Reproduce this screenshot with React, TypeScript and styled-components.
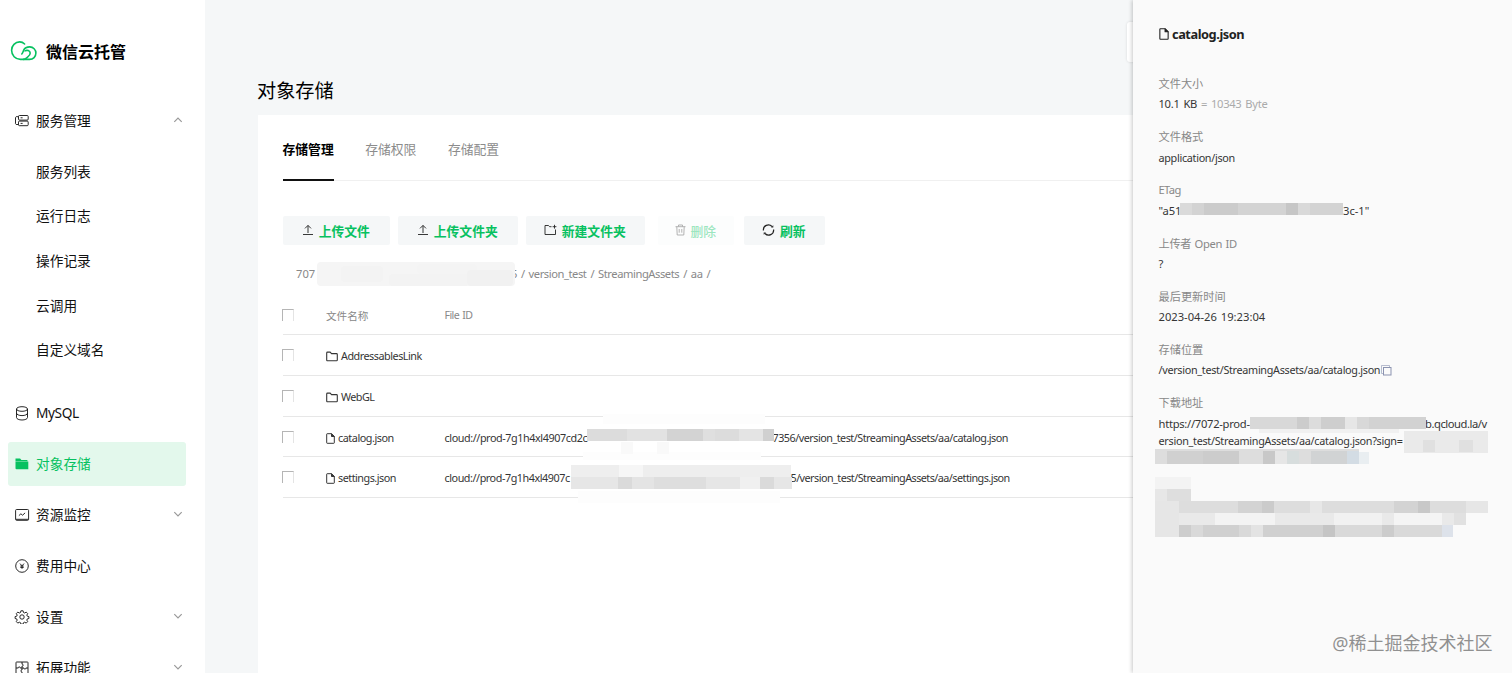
import React from 'react';
import styled, { createGlobalStyle } from 'styled-components';

const GlobalStyle = createGlobalStyle`
  * { box-sizing: border-box; }
  body {
    margin: 0;
    overflow: hidden;
    background: #f5f7f8;
    font-family: 'Noto Sans', 'Noto Sans CJK SC', sans-serif;
    font-size: 11.2px;
    color: #353535;
  }
`;

const Page = styled.div`
  display: flex;
  position: relative;
  width: 1512px;
  height: 673px;
  overflow: hidden;
`;

const Sidebar = styled.aside`
  width: 205px;
  flex: none;
  height: 673px;
  background: #fff;
  overflow: hidden;
`;

const Brand = styled.div`
  display: flex;
  align-items: center;
  height: 30px;
  margin: 36px 0 32.6px 10px;
  font-size: 16px;
  font-weight: 700;
  color: #000;
  svg { margin-right: 8px; }
`;

const NavItem = styled.div<{ $active?: boolean }>`
  display: flex;
  align-items: center;
  width: 178px;
  height: 44.8px;
  margin: 0 0 6px 8px;
  padding: 0 3px 1px 6px;
  border-radius: 3px;
  font-size: 13.7px;
  color: ${(p) => (p.$active ? '#07c160' : '#111')};
  background: ${(p) => (p.$active ? '#e3f8ec' : 'transparent')};
  > svg:first-child { margin: 2px 6px 0 0; }
  > span { flex: 1; }
`;

const SubNav = styled.div`
  margin-bottom: 18.4px;
`;

const SubItem = styled.div`
  display: flex;
  align-items: center;
  height: 44.6px;
  padding: 0 0 1.6px 36px;
  font-size: 13.7px;
  color: #111;
`;

const Main = styled.main`
  flex: 1;
  display: flex;
  flex-direction: column;
  padding-left: 53px;
`;

const Title = styled.h1`
  margin: 76px 0 9px -1px;
  height: 30px;
  line-height: 30px;
  font-size: 19.2px;
  font-weight: 400;
  color: #000;
`;

const Panel = styled.section`
  flex: 1;
  padding-left: 24.5px;
  background: #fff;
`;

const Tabs = styled.div`
  display: flex;
  gap: 31.5px;
  height: 66px;
  border-bottom: 1px solid #f0f0f0;
`;

const Tab = styled.div<{ $active?: boolean }>`
  height: 66px;
  line-height: 68px;
  font-size: 12.8px;
  font-weight: ${(p) => (p.$active ? 700 : 400)};
  color: ${(p) => (p.$active ? '#000' : '#8c8c8c')};
  border-bottom: ${(p) => (p.$active ? '2px solid #111' : 'none')};
`;

const Toolbar = styled.div`
  display: flex;
  margin-top: 35px;
`;

const ToolButton = styled.div<{ $w: number; $gap: number; $disabled?: boolean }>`
  display: flex;
  align-items: center;
  justify-content: center;
  gap: 4.5px;
  width: ${(p) => p.$w}px;
  height: 29px;
  margin-right: ${(p) => p.$gap}px;
  border-radius: 2px;
  background: ${(p) => (p.$disabled ? '#fcfdfd' : '#f5f7f8')};
  font-size: 12.8px;
  font-weight: ${(p) => (p.$disabled ? 500 : 700)};
  color: ${(p) => (p.$disabled ? '#9ce6bf' : '#07c160')};
  svg { color: ${(p) => (p.$disabled ? '#aaa' : '#222')}; margin-top: -1px; }
`;

const Crumbs = styled.div`
  position: relative;
  display: flex;
  align-items: center;
  height: 24px;
  margin: 17px 0 0 13.5px;
  padding-bottom: 1px;
  color: #888;
`;

const Table = styled.div`
  margin-top: 10px;
`;

const Row = styled.div<{ $head?: boolean }>`
  position: relative;
  display: grid;
  grid-template-columns: 43.5px 118.5px 1fr;
  align-items: center;
  height: ${(p) => (p.$head ? 39 : 40.75)}px;
  padding-top: ${(p) => (p.$head ? 0 : 1.6)}px;
  border-bottom: 1px solid #e7e7e7;
  color: ${(p) => (p.$head ? '#888' : '#353535')};
  font-size: ${(p) => (p.$head ? 10.6 : 10.8)}px;
`;

const Checkbox = styled.span`
  width: 12px;
  height: 12px;
  margin: -1px 0 0 -0.5px;
  border-top: 1px solid #b5b5b5;
  border-left: 1px solid #b5b5b5;
  border-right: 1px solid #e4e4e4;
`;

const Cell = styled.span`
  display: flex;
  align-items: center;
  white-space: nowrap;
  svg { margin: 2px 3px 0 0; }
`;

const Text = styled.span<{ $ls?: number; $w?: number; $ws?: number; $size?: number }>`
  display: inline-block;
  white-space: pre;
  letter-spacing: ${(p) => p.$ls ?? 0}px;
  word-spacing: ${(p) => p.$ws ?? 0}px;
  ${(p) => (p.$size ? `font-size: ${p.$size}px;` : '')}
  ${(p) => (p.$w ? `width: ${p.$w}px; flex: none;` : '')}
`;

const Overlay = styled.svg<{ $x: number; $y: number }>`
  && {
    position: absolute;
    left: ${(p) => p.$x}px;
    top: ${(p) => p.$y}px;
    margin: 0;
  }
`;

const FloatingTab = styled.div`
  position: absolute;
  left: 1127px;
  top: 22px;
  width: 20px;
  height: 40px;
  border-radius: 3px;
  background: #fff;
  box-shadow: 0 0 3px rgba(0, 0, 0, 0.12);
`;

const Drawer = styled.aside`
  position: absolute;
  left: 1133px;
  top: 0;
  width: 379px;
  height: 673px;
  padding: 24px 0 0 25.5px;
  background: #fafafa;
  box-shadow: -1px 0 4px rgba(0, 0, 0, 0.22);
`;

const DrawerTitle = styled.div`
  display: flex;
  align-items: center;
  gap: 3.5px;
  height: 20px;
  margin-bottom: 30px;
  font-size: 12.8px;
  font-weight: 700;
  color: #222;
`;

const Field = styled.div`
  position: relative;
  height: 53.2px;
`;

const Label = styled.div`
  height: 21.4px;
  line-height: 19px;
  color: #888;
`;

const Value = styled.div`
  display: flex;
  align-items: center;
  height: 17px;
  line-height: 17px;
  color: #353535;
  svg { margin: 2px 0 0 1px; }
`;

const Muted = styled.span`
  color: #aaa;
`;

const Watermark = styled.div`
  position: absolute;
  right: 19.5px;
  bottom: 16px;
  line-height: 28px;
  font-size: 18px;
  color: #909090;
  text-shadow: 0 0 1px #fff;
  white-space: nowrap;
`;

type Rect = [number, number, number, number, string];

const Mosaic = ({ x, y, w, h, rects, r = 0 }: { x: number; y: number; w: number; h: number; rects: Rect[]; r?: number }) => (
  <Overlay $x={x} $y={y} width={w} height={h} viewBox={`0 0 ${w} ${h}`}>
    {rects.map(([rx, ry, rw, rh, c], i) => (
      <rect key={i} x={rx} y={ry} width={rw} height={rh} fill={c} rx={r} />
    ))}
  </Overlay>
);

const Icon = ({ w = 14, h = 14, box, children, sw = 0.9 }: { w?: number; h?: number; box?: string; children: React.ReactNode; sw?: number }) => (
  <svg width={w} height={h} viewBox={box ?? `0 0 ${w} ${h}`} fill="none" stroke="currentColor" strokeWidth={sw} strokeLinejoin="round">
    {children}
  </svg>
);

const Logo = () => (
  <svg width="28" height="22" viewBox="0 0 28 22" fill="none" stroke="#07c160" strokeWidth="1.6" strokeLinecap="round" strokeLinejoin="round">
    <path d="M14.6 4C13.200 2.600 11.600 1.900 9.700 1.900C5.200 1.900 1.600 5.600 1.600 10.200C1.600 15.200 5.400 19.400 10.400 19.400H19.600C23.200 19.400 25.900 16.600 25.900 13.100C25.900 9.600 23.200 6.900 19.800 6.900C17 6.900 14.600 8.200 13.700 10.200C13.100 11.600 12.900 12.900 11.800 14" />
    <path d="M15 10.900C17 9.800 20 10.500 20.200 13C20.300 15.200 18.600 16.300 17.200 17.400C16 18.400 15.200 19.300 13.600 19.400" />
  </svg>
);

const Chevron = ({ up }: { up?: boolean }) => (
  <svg width="10" height="6" viewBox="0 0 10 6" fill="none" stroke="#999" strokeWidth="1.2">
    <path d={up ? 'M1.3 4.8l3.7-3.7 3.7 3.7' : 'M1.3 1.2l3.7 3.7 3.7-3.7'} />
  </svg>
);

const ServiceIcon = () => (
  <Icon w={16}>
    <rect x="4.500" y="1.500" width="9.700" height="4.600" rx="1" />
    <rect x="4.500" y="7.100" width="9.700" height="4.600" rx="1" />
    <path d="M4.500 2.700H2.200L1.500 3.500v6.200l.7.8h2.300M6.600 3.800h2M6.600 9.400h2" />
  </Icon>
);
const DbIcon = () => (
  <Icon w={16} h={15}>
    <ellipse cx="8" cy="3" rx="5.500" ry="2.300" />
    <path d="M2.500 3v8.600c0 1.300 2.500 2.400 5.500 2.400s5.500-1.100 5.500-2.400V3M2.500 7.200c0 1.300 2.500 2.400 5.500 2.400s5.500-1.100 5.500-2.400" />
  </Icon>
);
const StoreIcon = () => (
  <Icon w={16}>
    <path d="M1.500 1.500h4.600l1.300 1.500h6v1.200H1.500z" fill="currentColor" stroke="none" />
    <path d="M1.500 4.600h12.800v7.700H2.500a1 1 0 0 1-1-1z" fill="currentColor" stroke="none" />
  </Icon>
);
const MonitorIcon = () => (
  <Icon w={16}>
    <rect x="1.600" y="1.500" width="13" height="10.800" rx="1" />
    <path d="M2 11.300h12.200M4.900 7.600l2-1.800 1.700 1.400 2.500-2.300" />
  </Icon>
);
const FeeIcon = () => (
  <Icon w={16}>
    <circle cx="8" cy="7" r="6.300" />
    <path d="M6 4.600l2 2.200 2-2.200M8 6.800v3M6.300 7h3.400M6.300 8.400h3.400" />
  </Icon>
);
const GearIcon = () => (
  <Icon w={16}>
    <circle cx="8" cy="7" r="2.200" />
    <path d="M6.900.8h2.200l.4 1.700 1.200.5 1.500-.9 1.500 1.500-.9 1.500.5 1.100 1.600.4v1.900l-1.600.4-.5 1.200.9 1.500-1.500 1.500-1.500-.9-1.200.5-.4 1.500H6.900l-.4-1.500-1.200-.5-1.500.9-1.500-1.500.9-1.500-.5-1.200-1.600-.4V6.600l1.600-.4.5-1.100-.9-1.500 1.500-1.500 1.500.9 1.200-.5z" />
  </Icon>
);
const ExtendIcon = () => (
  <Icon w={16}>
    <rect x="2" y="1" width="12" height="12" rx=".6" />
    <path d="M8 1v2.200c1.600-.4 1.600 2.300 0 1.900V9c-1.500-.4-1.500 2.200 0 1.900V13M2 7h2.300c-.4-1.500 2.200-1.500 1.900 0H10c-.4 1.500 2.200 1.500 1.900 0H14" />
  </Icon>
);
const UploadIcon = () => (
  <Icon w={12} h={12}>
    <path d="M1 10.500h10M6 9V1.500M3 4.400l3-3 3 3" />
  </Icon>
);
const NewFolderIcon = () => (
  <Icon w={13} h={12}>
    <path d="M7.500 2.700H5.600L4.500 1.500H1v9h10.500V5.500M8.600 2.700h3.800M10.500.8v3.800" />
  </Icon>
);
const TrashIcon = () => (
  <Icon w={11} h={12}>
    <path d="M.5 2.700h10M3.500 2.700V1h4v1.700M1.800 2.700l.4 8.300h6.600l.4-8.300M4.200 5v3.700M6.800 5v3.700" />
  </Icon>
);
const RefreshIcon = () => (
  <Icon w={13} h={12} sw={1.2}>
    <path d="M1.400 6.500A5 5 0 0 1 10 2.500M11.600 5.500A5 5 0 0 1 3 9.500" />
    <path d="M11.300 1.300v2.300H9zM1.700 10.700V8.400H4z" fill="currentColor" stroke="none" />
  </Icon>
);
const FolderIcon = () => (
  <Icon w={12} h={11} sw={1.1}>
    <path d="M.7 9V1.900c0-.5.3-.8.8-.8h2.700l1.300 1.500h5c.5 0 .8.300.8.800V9c0 .5-.3.800-.8.800h-9c-.5 0-.8-.3-.8-.8z" />
  </Icon>
);
const FileIcon = ({ w = 9, h = 11 }: { w?: number; h?: number }) => (
  <Icon w={w} h={h} box="0 0 9 11" sw={1}>
    <path d="M.7 1.200c0-.3.200-.5.500-.5h4.300l2.800 2.800v6.300c0 .3-.2.500-.5.500H1.200c-.3 0-.5-.2-.5-.5z" />
    <path d="M5.500.7v2.800h2.800z" fill="currentColor" />
  </Icon>
);
const CopyIcon = () => (
  <svg width="11" height="11" viewBox="0 0 11 11" fill="none" stroke="#8b93b0" strokeWidth="1">
    <path d="M2.500 8.500h-2v-8h8v2" opacity=".6" />
    <rect x="2.500" y="2.500" width="7.500" height="7.500" />
  </svg>
);

const subItems = ['服务列表', '运行日志', '操作记录', '云调用', '自定义域名'];

export default function App() {
  return (
    <>
      <GlobalStyle />
      <Page>
        <Sidebar>
          <Brand><Logo />微信云托管</Brand>
          <NavItem><ServiceIcon /><span>服务管理</span><Chevron up /></NavItem>
          <SubNav>{subItems.map((s) => <SubItem key={s}>{s}</SubItem>)}</SubNav>
          <NavItem><DbIcon /><Text $ls={-0.4}>MySQL</Text></NavItem>
          <NavItem $active><StoreIcon /><span>对象存储</span></NavItem>
          <NavItem><MonitorIcon /><span>资源监控</span><Chevron /></NavItem>
          <NavItem><FeeIcon /><span>费用中心</span></NavItem>
          <NavItem><GearIcon /><span>设置</span><Chevron /></NavItem>
          <NavItem><ExtendIcon /><span>拓展功能</span><Chevron /></NavItem>
        </Sidebar>

        <Main>
          <Title>对象存储</Title>
          <Panel>
            <Tabs>
              <Tab $active>存储管理</Tab>
              <Tab>存储权限</Tab>
              <Tab>存储配置</Tab>
            </Tabs>
            <Toolbar>
              <ToolButton $w={107} $gap={8}><UploadIcon />上传文件</ToolButton>
              <ToolButton $w={120} $gap={8}><UploadIcon />上传文件夹</ToolButton>
              <ToolButton $w={119} $gap={13}><NewFolderIcon />新建文件夹</ToolButton>
              <ToolButton $w={76} $gap={10} $disabled><TrashIcon />删除</ToolButton>
              <ToolButton $w={81} $gap={0}><RefreshIcon />刷新</ToolButton>
            </Toolbar>
            <Crumbs>
              <Text $w={215}>707</Text>
              <Text $ls={-0.45} $ws={1.5}>5 / version_test / StreamingAssets / aa /</Text>
              <Mosaic x={21} y={0} w={198} h={24} r={4} rects={[
                [0, 0, 198, 24, '#f5f5f5'], [24, 4, 42, 16, '#f3f3f3'], [72, 12, 80, 12, '#f3f3f3'], [100, 2, 60, 10, '#f4f4f4'], [150, 8, 46, 16, '#f1f1f1'],
              ]} />
            </Crumbs>
            <Table>
              <Row $head><Checkbox /><Cell>文件名称</Cell><Cell><Text $ls={-0.6} $ws={1}>File ID</Text></Cell></Row>
              <Row><Checkbox /><Cell><FolderIcon /><Text $ls={-0.48}>AddressablesLink</Text></Cell></Row>
              <Row><Checkbox /><Cell><FolderIcon /><Text $ls={-0.55}>WebGL</Text></Cell></Row>
              <Row>
                <Checkbox /><Cell><FileIcon /><Text $ls={-0.45}>catalog.json</Text></Cell>
                <Cell><Text $w={328} $ls={-0.42}>cloud://prod-7g1h4xl4907cd2c</Text><Text $ls={-0.5}>7356/version_test/StreamingAssets/aa/catalog.json</Text></Cell>
                <Mosaic x={284} y={-3} w={212} h={54} rects={[
                  [36, 0, 162, 10, '#fdfdfd'], [16, 38, 178, 8, '#fdfdfd'],
                  [20, 15, 187, 12, '#dcdcdc'], [60, 15, 40, 12, '#e2e2e2'], [100, 15, 36, 12, '#d3d3d3'], [136, 15, 12, 12, '#dfdfdf'], [172, 15, 24, 12, '#e4e4e4'], [196, 15, 11, 12, '#d0d0d0'],
                  [54, 28, 12, 12, '#f9f9f9'], [90, 28, 12, 12, '#f9f9f9'],
                ]} />
              </Row>
              <Row>
                <Checkbox /><Cell><FileIcon /><Text $ls={-0.5}>settings.json</Text></Cell>
                <Cell><Text $w={346} $ls={-0.45}>cloud://prod-7g1h4xl4907c</Text><Text $ls={-0.54}>5/version_test/StreamingAssets/aa/settings.json</Text></Cell>
                <Mosaic x={287} y={5.5} w={225} h={40} rects={[
                  [8, 28, 202, 12, '#fdfdfd'],
                  [1, 2, 220, 24, '#eeeeee'], [49, 2, 24, 12, '#f6f6f6'], [1, 14, 221, 12, '#e6e6e6'], [48, 14, 14, 12, '#dadada'], [62, 14, 22, 12, '#e4e4e4'], [84, 14, 52, 12, '#dedede'], [170, 14, 20, 12, '#f0f0f0'], [190, 14, 14, 12, '#dadada'],
                ]} />
              </Row>
            </Table>
          </Panel>
        </Main>

        <FloatingTab />
        <Drawer>
          <DrawerTitle><FileIcon w={10} h={12} /><Text $ls={-0.45}>catalog.json</Text></DrawerTitle>
          <Field><Label>文件大小</Label><Value><Text $ls={-0.3} $ws={1.3}>10.1 KB <Muted>= 10343 Byte</Muted></Text></Value></Field>
          <Field><Label>文件格式</Label><Value><Text $size={10.8} $ls={-0.3}>application/json</Text></Value></Field>
          <Field>
            <Label><Text $ls={-0.6}>ETag</Text></Label>
            <Value><Text $w={184.5} $ls={-0.1}>"a51</Text><Text>3c-1"</Text></Value>
            <Mosaic x={21.5} y={23} w={163} h={12} rects={[
              [0, 0, 163, 12, '#d3d3d3'], [0, 0, 12, 12, '#dadada'], [24, 0, 34, 12, '#cbcbcb'], [106, 0, 12, 12, '#c6c6c6'], [118, 0, 12, 12, '#d9d9d9'],
            ]} />
          </Field>
          <Field><Label><Text $ls={-0.3} $ws={0.8}>上传者 Open ID</Text></Label><Value>?</Value></Field>
          <Field><Label>最后更新时间</Label><Value><Text $ws={1}>2023-04-26 19:23:04</Text></Value></Field>
          <Field><Label>存储位置</Label><Value><Text $size={10.8} $ls={-0.3}>/version_test/StreamingAssets/aa/catalog.json</Text><CopyIcon /></Value></Field>
          <Field>
            <Label>下载地址</Label>
            <Value><Text $w={266.5} $ls={-0.28}>https://7072-prod-</Text><Text $ls={-0.45}>b.qcloud.la/v</Text></Value>
            <Value><Text $size={10.8} $ls={-0.28}>ersion_test/StreamingAssets/aa/catalog.json?sign=</Text></Value>
            <Mosaic x={-3.5} y={23.6} w={336} h={122} rects={[
              [95, 0, 176, 12, '#d8d8d8'], [142, 0, 12, 12, '#cccccc'], [154, 0, 12, 12, '#dcdcdc'], [166, 0, 24, 12, '#cecece'], [190, 0, 12, 12, '#e6e6e6'], [214, 0, 57, 12, '#d2d2d2'],
              [104, 12, 140, 4, '#f1f1f1'], [249, 14, 84, 22, '#eaeaea'], [268, 23, 12, 12, '#e0e0e0'], [304, 23, 14, 12, '#e0e0e0'],
              [0, 32, 204, 15, '#dddddd'], [12, 34, 36, 13, '#d0d0d0'], [48, 34, 36, 13, '#cccccc'], [108, 34, 12, 13, '#c8c8c8'], [120, 34, 12, 13, '#e6e6e6'], [132, 34, 12, 13, '#d7dddd'], [156, 34, 36, 13, '#d1d3d4'], [192, 34, 12, 13, '#d3dce4'], [204, 35, 10, 12, '#e9eef1'],
              [0, 60, 36, 12, '#f3f3f3'], [0, 72, 36, 12, '#e7e7e7'], [12, 72, 24, 12, '#dedede'],
              [0, 84, 333, 12, '#dddddd'], [0, 84, 24, 36, '#e6e6e6'], [83, 84, 24, 12, '#d3d3d3'], [107, 84, 12, 12, '#cbcbcb'], [155, 84, 12, 12, '#e7e7e7'], [239, 84, 24, 12, '#d3d3d3'], [263, 84, 12, 12, '#c8c8c8'], [311, 84, 22, 12, '#e6e6e6'],
              [24, 96, 275, 12, '#e9e9e9'], [60, 96, 60, 12, '#f3f3f3'], [179, 96, 48, 12, '#f1f1f1'], [239, 96, 48, 12, '#f4f4f4'], [299, 96, 12, 12, '#e1e1e1'],
              [24, 108, 12, 12, '#cdcdcd'], [36, 108, 251, 12, '#d9d9d9'], [48, 108, 36, 12, '#d0d0d0'], [96, 108, 12, 12, '#e3e3e3'], [108, 108, 60, 12, '#d0d0d0'], [168, 108, 12, 12, '#c5c5c5'], [227, 108, 12, 12, '#cccccc'], [287, 108, 11, 12, '#dde2ea'],
            ]} />
          </Field>
          <Watermark>@稀土掘金技术社区</Watermark>
        </Drawer>
      </Page>
    </>
  );
}
